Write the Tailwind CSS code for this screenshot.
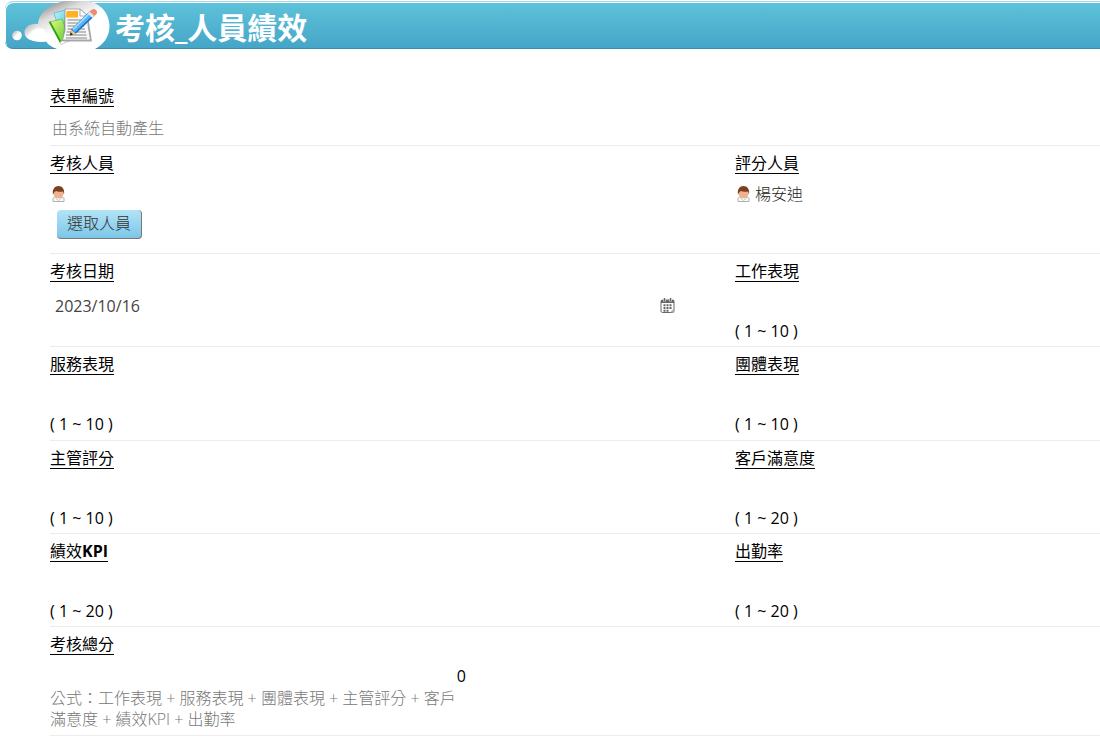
<!DOCTYPE html>
<html lang="zh-Hant">
<head>
  <meta charset="UTF-8" />
  <meta name="viewport" content="width=device-width, initial-scale=1.0"/>
  <title>考核_人員績效</title>
  <script src="https://cdn.jsdelivr.net/npm/@tailwindcss/browser@4"></script>
</head>
<body class="bg-white text-black text-base leading-5 font-['Open_Sans','Noto_Sans_CJK_TC',sans-serif]">
  <!-- Header -->
  <header class="ml-[5px] mt-px h-12 flex items-center rounded-l-lg border-t border-b border-t-[#a9d9e8] border-b-[#378fae] shadow-[inset_1px_1px_0_#ffffff] bg-linear-to-b from-[#5fc3da] to-[#45a5c8]">
    <svg class="w-[106px] h-12 shrink-0" viewBox="5 2 106 48" aria-hidden="true">
      <defs>
        <linearGradient id="cloud" gradientUnits="userSpaceOnUse" x1="62" y1="1" x2="73" y2="25">
          <stop offset="0" stop-color="#a2a2a2"/><stop offset=".4" stop-color="#dcdcdc"/><stop offset="1" stop-color="#fff"/>
        </linearGradient>
        <linearGradient id="puff" x1="0" y1="0" x2="1" y2="1">
          <stop offset="0" stop-color="#a8a8a8"/><stop offset=".5" stop-color="#fff"/>
        </linearGradient>
        <linearGradient id="green" x1="0" y1="0" x2="1" y2="1">
          <stop offset="0" stop-color="#e4fa80"/><stop offset="1" stop-color="#58c830"/>
        </linearGradient>
        <linearGradient id="blue" x1="0" y1="0" x2="1" y2="1">
          <stop offset="0" stop-color="#bdf3fa"/><stop offset="1" stop-color="#35b3cf"/>
        </linearGradient>
      </defs>
      <circle cx="17" cy="36.500" r="4.800" fill="url(#puff)"/>
      <path d="M49 42C38 44 25 42 24.500 34C24 28 31 24 37 25L49 24Z" fill="url(#puff)"/>
      <path d="M46 42C42 38 38 32 38 25C39 13 51 3 68 2H87C101 4 109.500 15 109.500 27C109.500 38 103 46 95 50H57C52 48 48 46 46 42Z" fill="url(#cloud)"/>
      <path d="M27 38C32 30 38 28 44 30L50 42C40 44 30 42 27 38Z" fill="#fff"/>
      <!-- Books -->
      <path d="M54 14L65 11L71 36L62 41Z" fill="url(#blue)" stroke="#2b9fba" stroke-width=".5"/>
      <path d="M49 23L62 20L69 39L60 43Z" fill="url(#green)" stroke="#39a51c" stroke-width=".5"/>
      <path d="M49 23L50.500 22.500L61 42L60 44Z" fill="#28a20c"/>
      <path d="M60 43L69 39V42L61 45.500Z" fill="#fff" stroke="#999" stroke-width=".5"/>
      <!-- Sheet -->
      <path d="M65 11H81L88 17L92 42.500H63Z" fill="#777" opacity=".6"/>
      <path d="M65 10H80L88 17V26L90.500 41H62.500L65 31Z" fill="#f8f8f8" stroke="#999" stroke-width=".8"/>
      <path d="M66.500 12H78V18.500H66Z" fill="#ffb21f"/>
      <path d="M80 10V17H88Z" fill="#fff" stroke="#999" stroke-width=".8"/>
      <path d="M67.500 21H84M67.500 24H83M67.500 27H84M67.500 30H85M66.500 33H86M66 36H86.500M66 39H87" stroke="#858585" stroke-width="1"/>
      <!-- Pencil -->
      <path d="M71 30.500L89.500 12.500L94.500 17L76 34.500L70 36.500Z" fill="#1b72c4"/>
      <path d="M71.800 30L89.500 12.800L93 16L75 33.200Z" fill="#58b5f5"/>
      <path d="M72.500 29.800L90 13L91 14L73.500 31Z" fill="#a8defc"/>
      <path d="M71 30.500L76 34.500L70 36.500Z" fill="#f3c680"/>
      <path d="M70 36.500L70.600 33.300L73 35.500Z" fill="#222"/>
      <path d="M89.500 12.500L92 10.500C94.500 8.500 98.500 12 96.500 15L94.500 17Z" fill="#f08a70"/>
      <path d="M87.500 14.500L89.500 12.500L94.500 17L92.500 19Z" fill="#e4e4e4"/>
    </svg>
    <h1 class="pl-1 pt-1.5 text-[30px] leading-9 font-bold text-white">考核_人員績效</h1>
  </header>

  <svg class="hidden" aria-hidden="true">
    <symbol id="person" viewBox="0 0 13 16">
      <path d="M1 15.500V12.500C1 11.500 3 11 6.500 11S12 11.500 12 12.500V15.500Z" fill="#fafafa" stroke="#b0b0b0"/>
      <path d="M3.500 12L6.500 14.500L9.500 12" fill="#fff" stroke="#c5c5c5"/>
      <ellipse cx="6.500" cy="7.500" rx="5" ry="5" fill="#f0b28c"/>
      <path d="M1 8.500C0 3 3 0 6.500 0S13 3 12 8.500L11 5.500C8 6 5 5.500 4 5C3 5.500 2 6 1 8.500Z" fill="#7b3f22"/>
    </symbol>
  </svg>

  <!-- Form -->
  <form class="mt-[30px] pl-[50px]">
    <div class="h-[67px] pt-[7px] border-b border-[#ececec]">
      <label for="form-no" class="inline-block border-b border-black">表單編號</label>
      <input id="form-no" type="text" readonly value="由系統自動產生" class="block mt-[11px] pl-[2px] h-5 w-64 font-light text-[#777777] outline-none">
    </div>

    <div class="h-[108px] grid grid-cols-[685fr_365fr] border-b border-[#ececec]">
      <div class="pt-[7px]">
        <label for="pick-person" class="inline-block border-b border-black">考核人員</label>
        <svg class="block mt-3 ml-[2px] w-[13px] h-4"><use href="#person"/></svg>
        <button id="pick-person" type="button" class="mt-2 ml-[7px] block h-[29px] w-[85px] pb-[3px] rounded-sm border-r border-b border-[#777777] bg-linear-to-b from-[#b3e4f6] to-[#7cc6e8] text-[#333333] font-light">選取人員</button>
      </div>
      <div class="pt-[7px]">
        <h2 class="inline-block border-b border-black">評分人員</h2>
        <div class="mt-[10px] ml-[2px] flex items-center gap-[5px] font-light text-[#222222]">
          <svg class="w-[13px] h-4"><use href="#person"/></svg>
          <span>楊安迪</span>
        </div>
      </div>
    </div>

    <div class="h-[93px] grid grid-cols-[685fr_365fr] border-b border-[#ececec]">
      <div class="pt-[7px]">
        <label for="date" class="inline-block border-b border-black">考核日期</label>
        <div class="mt-[14px] pl-[5px] pr-[60px] flex items-center justify-between">
          <input id="date" type="text" value="2023/10/16" class="h-5 w-64 text-[#444444] outline-none">
          <button type="button" aria-label="日曆">
            <svg class="block w-[15px] h-4" viewBox="0 0 15 16" aria-hidden="true">
              <rect x="1" y="2" width="13" height="12.500" rx="1.500" fill="#fff" stroke="#666"/>
              <path d="M1 2H14V5H1Z" fill="#666"/>
              <path d="M4.500 0V3.500M10.500 0V3.500" stroke="#fff" stroke-width="2.500"/>
              <path d="M4.500 0V3.500M10.500 0V3.500" stroke="#666" stroke-width="1.500"/>
              <path d="M3.500 7.200H12M3.500 10H12M3.500 12.700H9" stroke="#666" stroke-width="2" stroke-dasharray="2 1"/>
              <path d="M10 14.500L14 10.500V14.500Z" fill="#aaa"/>
            </svg>
          </button>
        </div>
      </div>
      <div class="pt-[7px]">
        <label for="work" class="inline-block border-b border-black">工作表現</label>
        <input id="work" type="text" class="block h-[39px] w-64 outline-none">
        <p>( 1 ~ 10 )</p>
      </div>
    </div>

    <div class="h-[94px] grid grid-cols-[685fr_365fr] border-b border-[#ececec]">
      <div class="pt-[7px]">
        <label for="service" class="inline-block border-b border-black">服務表現</label>
        <input id="service" type="text" class="block h-[39px] w-64 outline-none">
        <p>( 1 ~ 10 )</p>
      </div>
      <div class="pt-[7px]">
        <label for="team" class="inline-block border-b border-black">團體表現</label>
        <input id="team" type="text" class="block h-[39px] w-64 outline-none">
        <p>( 1 ~ 10 )</p>
      </div>
    </div>

    <div class="h-[93px] grid grid-cols-[685fr_365fr] border-b border-[#ececec]">
      <div class="pt-[7px]">
        <label for="manager" class="inline-block border-b border-black">主管評分</label>
        <input id="manager" type="text" class="block h-[39px] w-64 outline-none">
        <p>( 1 ~ 10 )</p>
      </div>
      <div class="pt-[7px]">
        <label for="customer" class="inline-block border-b border-black">客戶滿意度</label>
        <input id="customer" type="text" class="block h-[39px] w-64 outline-none">
        <p>( 1 ~ 20 )</p>
      </div>
    </div>

    <div class="h-[93px] grid grid-cols-[685fr_365fr] border-b border-[#ececec]">
      <div class="pt-[7px]">
        <label for="kpi" class="inline-block border-b border-black">績效<span class="font-bold">KPI</span></label>
        <input id="kpi" type="text" class="block h-[39px] w-64 outline-none">
        <p>( 1 ~ 20 )</p>
      </div>
      <div class="pt-[7px]">
        <label for="attendance" class="inline-block border-b border-black">出勤率</label>
        <input id="attendance" type="text" class="block h-[39px] w-64 outline-none">
        <p>( 1 ~ 20 )</p>
      </div>
    </div>

    <div class="h-[109px] pt-[7px] border-b border-[#ececec]">
      <label for="total" class="inline-block border-b border-black">考核總分</label>
      <div class="w-[416px]">
        <output id="total" class="block mt-[11px] text-right">0</output>
        <p class="mt-[2px] leading-[21px] font-light text-[#777777]">公式：工作表現 + 服務表現 + 團體表現 + 主管評分 + 客戶滿意度 + 績效KPI + 出勤率</p>
      </div>
    </div>
  </form>
</body>
</html>
